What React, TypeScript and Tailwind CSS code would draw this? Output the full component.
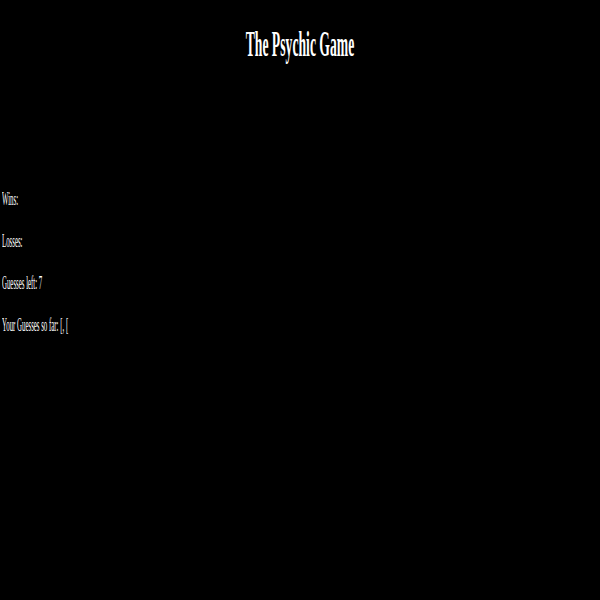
export default function App() {
  const lines = ['Wins:', 'Losses:', 'Guesses left: 7', 'Your Guesses so far: [, ['];
  return (
    <div className="min-h-[600px] w-full bg-black text-white font-['Liberation_Serif',serif]">
      <div className="flex justify-center pt-[24px]">
        <h1 className="text-[36px] leading-[40px] font-bold scale-x-[0.38] origin-center whitespace-nowrap">
          The Psychic Game
        </h1>
      </div>
      <div className="flex flex-col gap-[22px] pt-[125px] pl-[2px]">
        {lines.map((t) => (
          <p key={t} className="text-[18px] leading-[20px] scale-x-[0.38] origin-left whitespace-nowrap">
            {t}
          </p>
        ))}
      </div>
    </div>
  );
}
